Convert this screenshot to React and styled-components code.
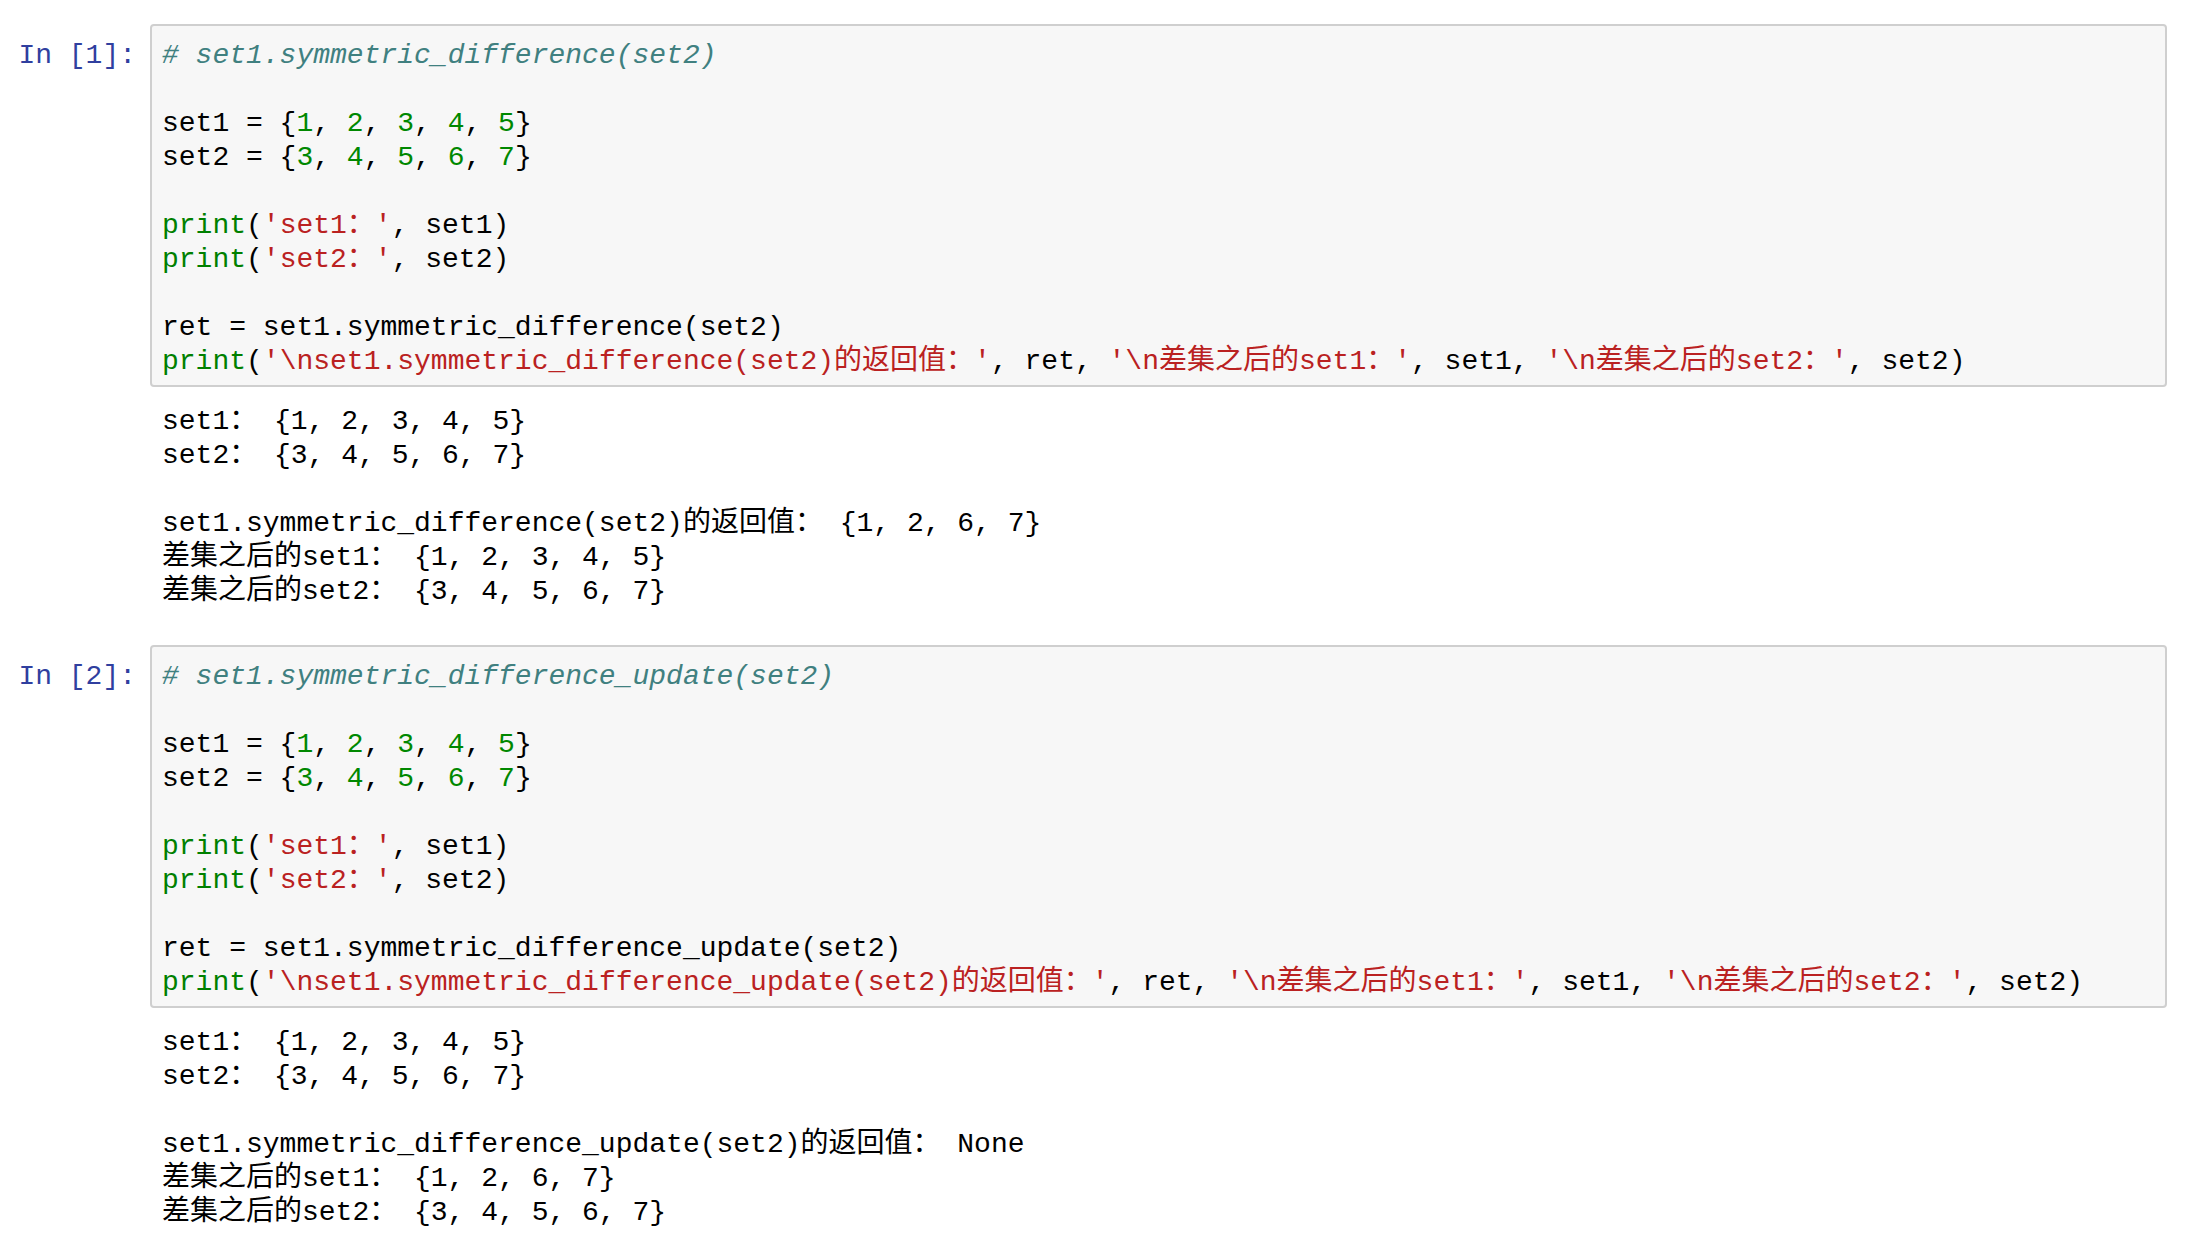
import React from "react";
import styled, { createGlobalStyle } from "styled-components";

const Global = createGlobalStyle`
  html, body { margin: 0; padding: 0; background: #ffffff; }
  body { font-family: "Liberation Mono", "Noto Sans CJK SC", monospace; }
`;

const Notebook = styled.div`
  padding: 24px 25px 0 0;
  display: flex;
  flex-direction: column;
  gap: 36px;
`;

const Cell = styled.div`
  display: grid;
  grid-template-columns: 150px 1fr;
`;

const Prompt = styled.div`
  font-family: "Liberation Mono", "Noto Sans CJK SC", monospace;
  font-size: 28px;
  line-height: 34px;
  color: #303f9f;
  text-align: right;
  padding: 15px 14px 0 0;
  white-space: pre;
`;

const InputBox = styled.div`
  border: 2px solid #cfcfcf;
  border-radius: 4px;
  background: #f7f7f7;
  padding: 13px 10px 6px 10px;
`;

const Code = styled.pre`
  margin: 0;
  font-family: "Liberation Mono", "Noto Sans CJK SC", monospace;
  font-size: 28px;
  line-height: 34px;
  color: #000000;
  white-space: pre;
`;

const OutputArea = styled.div`
  grid-column: 2;
  padding: 18px 12px 0 12px;
`;

const Tok = styled.span`
  color: ${(p) =>
    p.$k === "c" ? "#408080" : p.$k === "b" ? "#008000" : p.$k === "n" ? "#008800" : p.$k === "s" ? "#ba2121" : "#000000"};
  font-style: ${(p) => (p.$k === "c" ? "italic" : "normal")};
`;

const T = (k, t) => ({ k, t });

function setLines(name) {
  return [
    [T("c", `# set1.${name}(set2)`)],
    [],
    [T("p", "set1 = {"), T("n", "1"), T("p", ", "), T("n", "2"), T("p", ", "), T("n", "3"), T("p", ", "), T("n", "4"), T("p", ", "), T("n", "5"), T("p", "}")],
    [T("p", "set2 = {"), T("n", "3"), T("p", ", "), T("n", "4"), T("p", ", "), T("n", "5"), T("p", ", "), T("n", "6"), T("p", ", "), T("n", "7"), T("p", "}")],
    [],
    [T("b", "print"), T("p", "("), T("s", "'set1：'"), T("p", ", set1)")],
    [T("b", "print"), T("p", "("), T("s", "'set2：'"), T("p", ", set2)")],
    [],
    [T("p", `ret = set1.${name}(set2)`)],
    [
      T("b", "print"),
      T("p", "("),
      T("s", `'\\nset1.${name}(set2)的返回值：'`),
      T("p", ", ret, "),
      T("s", "'\\n差集之后的set1：'"),
      T("p", ", set1, "),
      T("s", "'\\n差集之后的set2：'"),
      T("p", ", set2)"),
    ],
  ];
}

const cells = [
  {
    n: 1,
    code: setLines("symmetric_difference"),
    out: [
      "set1： {1, 2, 3, 4, 5}",
      "set2： {3, 4, 5, 6, 7}",
      "",
      "set1.symmetric_difference(set2)的返回值： {1, 2, 6, 7}",
      "差集之后的set1： {1, 2, 3, 4, 5}",
      "差集之后的set2： {3, 4, 5, 6, 7}",
    ],
  },
  {
    n: 2,
    code: setLines("symmetric_difference_update"),
    out: [
      "set1： {1, 2, 3, 4, 5}",
      "set2： {3, 4, 5, 6, 7}",
      "",
      "set1.symmetric_difference_update(set2)的返回值： None",
      "差集之后的set1： {1, 2, 6, 7}",
      "差集之后的set2： {3, 4, 5, 6, 7}",
    ],
  },
];

export default function App() {
  return (
    <>
      <Global />
      <Notebook>
        {cells.map((c) => (
          <Cell key={c.n}>
            <Prompt>{`In [${c.n}]:`}</Prompt>
            <InputBox>
              <Code>
                {c.code.map((line, i) => (
                  <React.Fragment key={i}>
                    {line.map((tk, j) => (
                      <Tok key={j} $k={tk.k}>
                        {tk.t}
                      </Tok>
                    ))}
                    {i < c.code.length - 1 ? "\n" : ""}
                  </React.Fragment>
                ))}
              </Code>
            </InputBox>
            <OutputArea>
              <Code>{c.out.join("\n")}</Code>
            </OutputArea>
          </Cell>
        ))}
      </Notebook>
    </>
  );
}
